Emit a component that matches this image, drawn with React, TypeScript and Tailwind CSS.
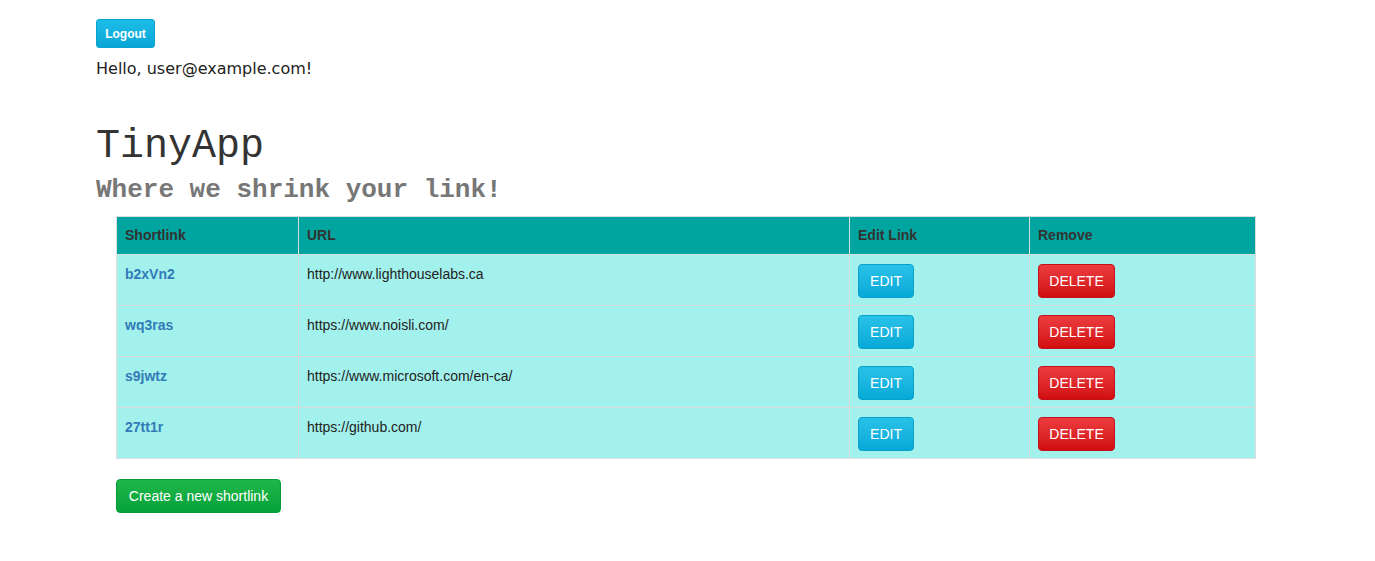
const urls = [
  { id: 'b2xVn2', longURL: 'http://www.lighthouselabs.ca' },
  { id: 'wq3ras', longURL: 'https://www.noisli.com/' },
  { id: 's9jwtz', longURL: 'https://www.microsoft.com/en-ca/' },
  { id: '27tt1r', longURL: 'https://github.com/' },
];

const App = () => {
  return (
    <div className="min-h-screen bg-white px-[96px] pt-[19px] font-['Liberation_Sans',Arial,sans-serif] text-[14px] text-[#333]">
      {/* Header */}
      <button className="h-[29px] w-[59px] rounded-[3px] border border-[#0aa3cf] bg-gradient-to-b from-[#1cbce8] to-[#07a6d6] text-[12px] font-bold text-white">
        Logout
      </button>
      <p className="mt-[10px] font-['DejaVu_Sans',sans-serif] text-[16px] leading-[22px] text-[#222]">
        Hello, user@example.com!
      </p>

      <h1 className="mt-[45px] font-['Liberation_Mono','Courier_New',monospace] text-[40px] leading-[44px] text-[#333]">
        TinyApp
      </h1>
      <h3 className="mt-[6px] font-['Liberation_Mono','Courier_New',monospace] text-[26px] font-bold leading-[30px] text-[#777]">
        Where we shrink your link!
      </h3>

      {/* Links table */}
      <div className="ml-[20px] mt-[11px]">
        <table className="w-[1140px] table-fixed border-collapse">
          <colgroup>
            <col className="w-[182px]" />
            <col className="w-[551px]" />
            <col className="w-[180px]" />
            <col />
          </colgroup>
          <thead>
            <tr className="h-[37px] bg-[#00a59f] text-left">
              <th className="border border-[#ddd] px-[8px] pt-[8px] pb-[8px] align-top font-bold">Shortlink</th>
              <th className="border border-[#ddd] px-[8px] pt-[8px] pb-[8px] align-top font-bold">URL</th>
              <th className="border border-[#ddd] px-[8px] pt-[8px] pb-[8px] align-top font-bold">Edit Link</th>
              <th className="border border-[#ddd] px-[8px] pt-[8px] pb-[8px] align-top font-bold">Remove</th>
            </tr>
          </thead>
          <tbody>
            {urls.map((url) => (
              <tr key={url.id} className="h-[51px] bg-[#a2f1ec]">
                <td className="border border-[#ddd] px-[8px] pt-[9px] align-top">
                  <a href="#" className="font-bold text-[#337ab7]">{url.id}</a>
                </td>
                <td className="border border-[#ddd] px-[8px] pt-[9px] align-top text-[#222]">{url.longURL}</td>
                <td className="border border-[#ddd] px-[8px] pt-[9px] pb-[7px] align-top">
                  <button className="h-[34px] w-[56px] rounded-[4px] border border-[#0aa0cc] bg-gradient-to-b from-[#28c2e8] to-[#04a9d8] text-[14px] text-white">
                    EDIT
                  </button>
                </td>
                <td className="border border-[#ddd] px-[8px] pt-[9px] pb-[7px] align-top">
                  <button className="h-[34px] w-[77px] rounded-[4px] border border-[#c4121a] bg-gradient-to-b from-[#ec3b3f] to-[#d10b0e] text-[14px] text-white">
                    DELETE
                  </button>
                </td>
              </tr>
            ))}
          </tbody>
        </table>

        <button className="mt-[20px] h-[34px] w-[165px] rounded-[4px] border border-[#0b9a3a] bg-gradient-to-b from-[#1db74a] to-[#03a23a] text-[14px] text-white">
          Create a new shortlink
        </button>
      </div>
    </div>
  );
};

export default App;
